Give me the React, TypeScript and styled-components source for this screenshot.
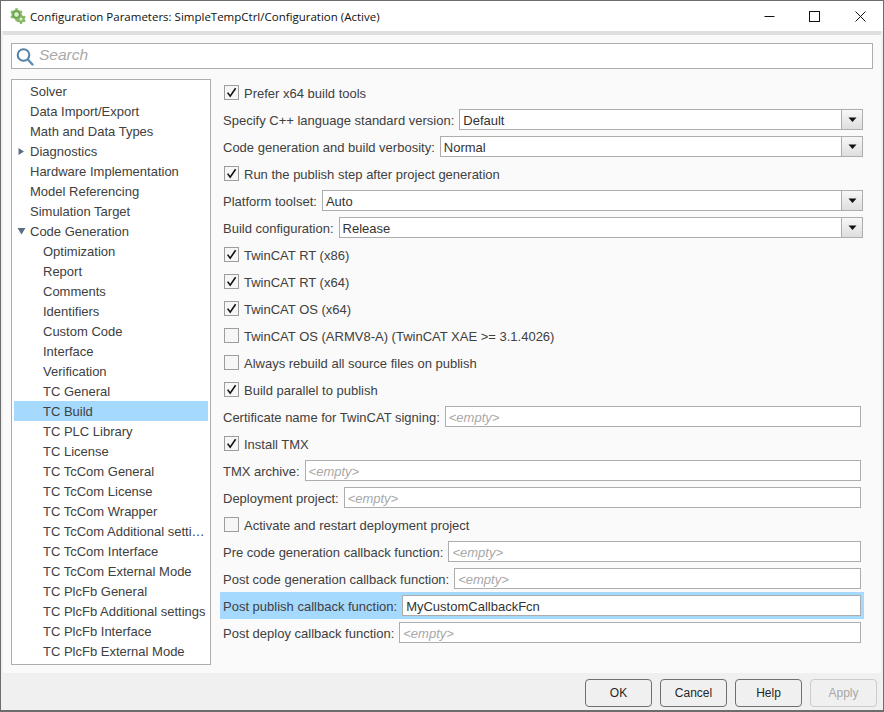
import React from "react";
import styled, { createGlobalStyle } from "styled-components";

const Global = createGlobalStyle`
  html, body { margin: 0; padding: 0; background: #f0f0f0; }
  * { box-sizing: border-box; }
`;

const Window = styled.div`
  width: 884px;
  height: 712px;
  border: 1px solid #6d6d6d;
  border-bottom-width: 2px;
  background: #f0f0f0;
  display: flex;
  flex-direction: column;
  font-family: "Liberation Sans", Arial, sans-serif;
  font-size: 13px;
  color: #404040;
  overflow: hidden;
`;

const TitleBar = styled.div`
  height: 30px;
  flex: none;
  background: #fff;
  display: flex;
  align-items: center;
  padding-left: 9px;
  font-family: "Open Sans", sans-serif;
  font-size: 11.5px;
  color: #111;
`;

const TitleText = styled.span`
  margin-left: 4px;
  flex: 1;
`;

const WinControls = styled.div`
  display: flex;
  align-items: center;
`;

const WinButton = styled.div`
  width: 45px;
  height: 30px;
  display: flex;
  align-items: center;
  justify-content: center;
  &:last-child {
    width: 46px;
  }
`;

const Body = styled.div`
  flex: 1;
  display: flex;
  flex-direction: column;
  padding: 0 2px;
  background: #f0f0f0;
  min-height: 0;
`;

const Panel = styled.div`
  height: 642px;
  flex: none;
  background: #fafafa;
  border-top: 4px solid #dfdfdf;
  padding: 8px;
  display: flex;
  flex-direction: column;
`;

const SearchBox = styled.div`
  height: 26px;
  flex: none;
  background: #fff;
  border: 1px solid #adadad;
  display: flex;
  align-items: center;
  padding-left: 4px;
  gap: 5px;
`;

const SearchPlaceholder = styled.span`
  font-style: italic;
  font-size: 15.5px;
  color: #aaaaaa;
  position: relative;
  top: -1px;
`;

const Main = styled.div`
  flex: 1;
  display: flex;
  margin-top: 10px;
  min-height: 0;
`;

const Tree = styled.div`
  width: 200px;
  height: 586px;
  flex: none;
  background: #fff;
  border: 1px solid #adadad;
  padding: 1px 2px;
`;

const TreeRow = styled.div<{ $level: number; $selected?: boolean }>`
  height: 20px;
  line-height: 22px;
  padding-left: ${(p) => (p.$level === 1 ? 29 : 16)}px;
  position: relative;
  white-space: nowrap;
  overflow: hidden;
  background: ${(p) => (p.$selected ? "#a6d9fe" : "transparent")};
`;

const TreeArrow = styled.svg`
  position: absolute;
  left: 3px;
  top: 6px;
  width: 9px;
  height: 9px;
`;

const Form = styled.div`
  flex: 1;
  padding-left: 9px;
  padding-right: 10px;
  display: flex;
  flex-direction: column;
`;

const FormRow = styled.div<{ $active?: boolean }>`
  height: 27px;
  flex: none;
  display: flex;
  align-items: center;
  padding: 0 1px 0 3px;
  margin-right: -1px;
  white-space: nowrap;
  background: ${(p) => (p.$active ? "#a6d9fe" : "transparent")};
`;

const CheckBox = styled.span`
  width: 15px;
  height: 15px;
  flex: none;
  background: #f6f6f6;
  border: 1px solid #9d9d9d;
  margin: 0 5px 0 1px;
  display: flex;
  align-items: center;
  justify-content: center;
`;

const CheckLabel = styled.span`
  padding-top: 2px;
`;

const Label = styled.span`
  flex: none;
  margin-right: 5px;
  padding-top: 2px;
`;

const Select = styled.div`
  flex: 1;
  height: 21px;
  background: #fff;
  border: 1px solid #adadad;
  display: flex;
  align-items: center;
  padding-left: 3px;
  color: #333;
`;

const SelectValue = styled.span`
  flex: 1;
  padding-top: 2px;
`;

const SelectButton = styled.div`
  width: 21px;
  height: 19px;
  border-left: 1px solid #adadad;
  background: linear-gradient(#f7f7f7, #dedede);
  display: flex;
  align-items: center;
  justify-content: center;
`;

const TextField = styled.div<{ $empty?: boolean }>`
  flex: 1;
  height: 21px;
  line-height: 21px;
  background: #fff;
  border: 1px solid #adadad;
  padding-left: 3px;
  margin-right: 2px;
  overflow: hidden;
  color: ${(p) => (p.$empty ? "#a8a8a8" : "#333")};
  font-style: ${(p) => (p.$empty ? "italic" : "normal")};
`;

const Footer = styled.div`
  flex: 1;
  display: flex;
  justify-content: flex-end;
  align-items: flex-start;
  gap: 8px;
  padding: 6px 4px 0 0;
`;

const Button = styled.div<{ $disabled?: boolean }>`
  width: 67px;
  height: 28px;
  border-radius: 4px;
  border: 1px solid ${(p) => (p.$disabled ? "#cccccc" : "#6f6f6f")};
  color: ${(p) => (p.$disabled ? "#a8a8a8" : "#262626")};
  background: #f0f0f0;
  font-size: 12px;
  display: flex;
  align-items: center;
  justify-content: center;
`;

const Check = () => (
  <svg width="13" height="13" viewBox="0 0 13 13">
    <path d="M2.6 6.6 L5.2 10.2 L10.6 2.2" fill="none" stroke="#111" strokeWidth="1.6" />
  </svg>
);

const GearIcon = () => (
  <svg width="16" height="16" viewBox="0 0 16 16">
    <g fill="#86b768">
      <circle cx="6.5" cy="6.5" r="5" />
      {[0, 60, 120, 180, 240, 300].map((a) => (
        <rect key={a} x="5.3" y="0.2" width="2.4" height="3" transform={`rotate(${a} 6.5 6.5)`} />
      ))}
      <circle cx="11" cy="11" r="3.8" />
      {[0, 60, 120, 180, 240, 300].map((a) => (
        <rect key={a} x="10" y="6" width="2" height="2.4" transform={`rotate(${a} 11 11)`} />
      ))}
    </g>
    <circle cx="6.5" cy="6.5" r="2.2" fill="#dceecd" />
    <circle cx="11" cy="11" r="1.6" fill="#dceecd" />
    <circle cx="6.5" cy="6.5" r="3.4" fill="none" stroke="#5c9440" strokeWidth="0.8" />
  </svg>
);

const SearchIcon = () => (
  <svg width="18" height="19" viewBox="0 0 18 19">
    <circle cx="7.5" cy="8" r="5.8" fill="none" stroke="#4f81a8" strokeWidth="2" />
    <path d="M11.8 12.5 L16.5 17.5" stroke="#5b8db5" strokeWidth="2.4" strokeLinecap="round" />
  </svg>
);

const DownTriangle = () => (
  <svg width="9" height="6" viewBox="0 0 9 6">
    <path d="M0.5 0.5 H8.5 L4.5 5 Z" fill="#111" />
  </svg>
);

const treeItems: [string, number, ("right" | "down")?][] = [
  ["Solver", 0],
  ["Data Import/Export", 0],
  ["Math and Data Types", 0],
  ["Diagnostics", 0, "right"],
  ["Hardware Implementation", 0],
  ["Model Referencing", 0],
  ["Simulation Target", 0],
  ["Code Generation", 0, "down"],
  ["Optimization", 1],
  ["Report", 1],
  ["Comments", 1],
  ["Identifiers", 1],
  ["Custom Code", 1],
  ["Interface", 1],
  ["Verification", 1],
  ["TC General", 1],
  ["TC Build", 1],
  ["TC PLC Library", 1],
  ["TC License", 1],
  ["TC TcCom General", 1],
  ["TC TcCom License", 1],
  ["TC TcCom Wrapper", 1],
  ["TC TcCom Additional setti…", 1],
  ["TC TcCom Interface", 1],
  ["TC TcCom External Mode", 1],
  ["TC PlcFb General", 1],
  ["TC PlcFb Additional settings", 1],
  ["TC PlcFb Interface", 1],
  ["TC PlcFb External Mode", 1],
];

type Row =
  | { kind: "check"; label: string; checked: boolean }
  | { kind: "select"; label: string; value: string }
  | { kind: "text"; label: string; value?: string; active?: boolean };

const rows: Row[] = [
  { kind: "check", label: "Prefer x64 build tools", checked: true },
  { kind: "select", label: "Specify C++ language standard version:", value: "Default" },
  { kind: "select", label: "Code generation and build verbosity:", value: "Normal" },
  { kind: "check", label: "Run the publish step after project generation", checked: true },
  { kind: "select", label: "Platform toolset:", value: "Auto" },
  { kind: "select", label: "Build configuration:", value: "Release" },
  { kind: "check", label: "TwinCAT RT (x86)", checked: true },
  { kind: "check", label: "TwinCAT RT (x64)", checked: true },
  { kind: "check", label: "TwinCAT OS (x64)", checked: true },
  { kind: "check", label: "TwinCAT OS (ARMV8-A) (TwinCAT XAE >= 3.1.4026)", checked: false },
  { kind: "check", label: "Always rebuild all source files on publish", checked: false },
  { kind: "check", label: "Build parallel to publish", checked: true },
  { kind: "text", label: "Certificate name for TwinCAT signing:" },
  { kind: "check", label: "Install TMX", checked: true },
  { kind: "text", label: "TMX archive:" },
  { kind: "text", label: "Deployment project:" },
  { kind: "check", label: "Activate and restart deployment project", checked: false },
  { kind: "text", label: "Pre code generation callback function:" },
  { kind: "text", label: "Post code generation callback function:" },
  { kind: "text", label: "Post publish callback function:", value: "MyCustomCallbackFcn", active: true },
  { kind: "text", label: "Post deploy callback function:" },
];

export default function App() {
  return (
    <Window>
      <Global />
      <TitleBar>
        <GearIcon />
        <TitleText>Configuration Parameters: SimpleTempCtrl/Configuration (Active)</TitleText>
        <WinControls>
          <WinButton>
            <svg width="11" height="11" viewBox="0 0 11 11">
              <path d="M0.5 5.5 H10.5" stroke="#111" strokeWidth="1" />
            </svg>
          </WinButton>
          <WinButton>
            <svg width="11" height="11" viewBox="0 0 11 11">
              <rect x="0.5" y="0.5" width="10" height="10" fill="none" stroke="#111" strokeWidth="1" />
            </svg>
          </WinButton>
          <WinButton>
            <svg width="11" height="11" viewBox="0 0 11 11">
              <path d="M0.5 0.5 L10.5 10.5 M10.5 0.5 L0.5 10.5" stroke="#111" strokeWidth="1" />
            </svg>
          </WinButton>
        </WinControls>
      </TitleBar>
      <Body>
        <Panel>
          <SearchBox>
            <SearchIcon />
            <SearchPlaceholder>Search</SearchPlaceholder>
          </SearchBox>
          <Main>
            <Tree>
              {treeItems.map(([name, level, arrow]) => (
                <TreeRow key={name} $level={level} $selected={name === "TC Build"}>
                  {arrow === "right" && (
                    <TreeArrow viewBox="0 0 9 9">
                      <path d="M1.5 1 L7 4.5 L1.5 8 Z" fill="#5a6f85" />
                    </TreeArrow>
                  )}
                  {arrow === "down" && (
                    <TreeArrow viewBox="0 0 9 9">
                      <path d="M0.5 1 H8.5 L4.5 7.5 Z" fill="#5a6f85" />
                    </TreeArrow>
                  )}
                  {name}
                </TreeRow>
              ))}
            </Tree>
            <Form>
              {rows.map((r) => {
                if (r.kind === "check") {
                  return (
                    <FormRow key={r.label}>
                      <CheckBox>{r.checked && <Check />}</CheckBox>
                      <CheckLabel>{r.label}</CheckLabel>
                    </FormRow>
                  );
                }
                if (r.kind === "select") {
                  return (
                    <FormRow key={r.label}>
                      <Label>{r.label}</Label>
                      <Select>
                        <SelectValue>{r.value}</SelectValue>
                        <SelectButton>
                          <DownTriangle />
                        </SelectButton>
                      </Select>
                    </FormRow>
                  );
                }
                return (
                  <FormRow key={r.label} $active={r.active}>
                    <Label>{r.label}</Label>
                    <TextField $empty={!r.value}>{r.value ?? "<empty>"}</TextField>
                  </FormRow>
                );
              })}
            </Form>
          </Main>
        </Panel>
        <Footer>
          <Button>OK</Button>
          <Button>Cancel</Button>
          <Button>Help</Button>
          <Button $disabled>Apply</Button>
        </Footer>
      </Body>
    </Window>
  );
}
